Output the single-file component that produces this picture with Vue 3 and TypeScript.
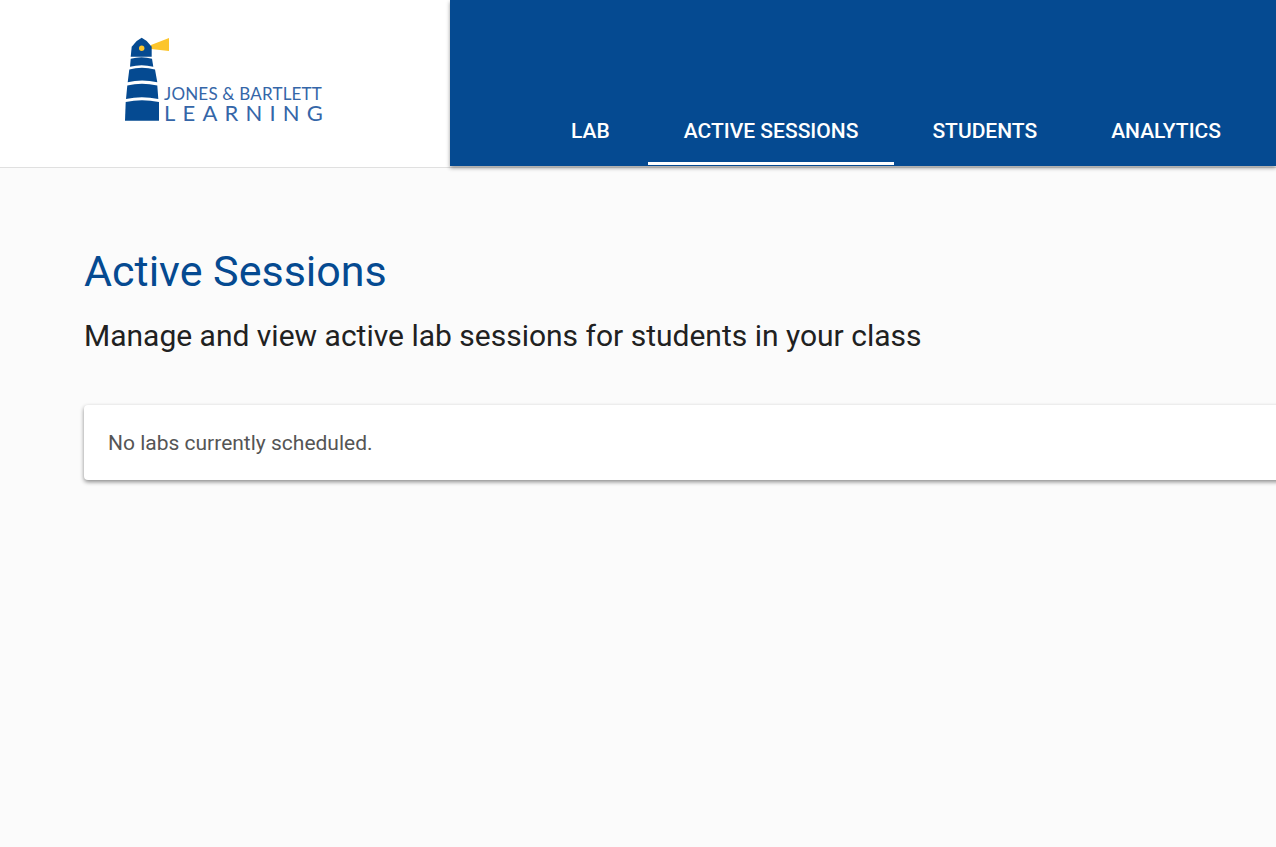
<template>
  <div class="page">
    <header class="topbar">
      <div class="brand">
        <div class="logo">
          <svg class="logo-mark" width="46" height="86" viewBox="0 0 46 86" aria-hidden="true">
            <path d="M27 9 L45 2 L45 15 L27 13 Z" fill="#fcc52c" />
            <path d="M6.7 20.7 L7.7 10.7 L12.7 5 L17.7 1.7 L22.7 5 L27.7 10.7 L27.7 20.7 Z" fill="#054a91" />
            <circle cx="17.7" cy="12.3" r="2.7" fill="#fcc52c" />
            <path d="M6.7 22.7 Q17.7 19.7 28 22.7 L29.3 30.7 Q17.7 27.7 6 30.7 Z" fill="#054a91" />
            <path d="M5.3 33.5 Q17.7 30 31 33.5 L33.3 46.3 Q17.7 42.8 3.7 46.3 Z" fill="#054a91" />
            <path d="M3.3 49.5 Q17.7 46 33.3 49.5 L34.3 63 Q17.7 59.5 2 63 Z" fill="#054a91" />
            <path d="M1.7 66 Q17.7 62.5 35 66 L35 84.7 L1 84.7 Z" fill="#054a91" />
          </svg>
          <div class="logo-words">
            <span class="logo-top">JONES &amp; BARTLETT</span>
            <span class="logo-bottom">LEARNING</span>
          </div>
        </div>
      </div>
      <nav class="tabs">
        <a
          v-for="tab in tabs"
          :key="tab"
          class="tab"
          :class="{ active: tab === activeTab }"
        >{{ tab }}</a>
      </nav>
    </header>

    <main class="content">
      <h1 class="title">Active Sessions</h1>
      <p class="subtitle">Manage and view active lab sessions for students in your class</p>
      <div class="card">No labs currently scheduled.</div>
    </main>
  </div>
</template>

<script setup lang="ts">
const tabs: string[] = ['LAB', 'ACTIVE SESSIONS', 'STUDENTS', 'ANALYTICS']
const activeTab = 'ACTIVE SESSIONS'
</script>

<style scoped>
.page {
  min-height: 847px;
  background: #fbfbfb;
  font-family: Roboto, "Liberation Sans", sans-serif;
  overflow: hidden;
}

.topbar {
  display: flex;
  height: 168px;
  background: #fff;
  border-bottom: 1px solid #e0e0e0;
  box-sizing: border-box;
}

.brand {
  width: 450px;
  flex-shrink: 0;
  padding: 36px 0 0 124px;
  box-sizing: border-box;
}

.logo {
  display: flex;
  align-items: flex-end;
  height: 86px;
}

.logo-mark {
  flex-shrink: 0;
}

.logo-words {
  display: flex;
  flex-direction: column;
  margin: 0 0 -2px -6px;
  color: #3566a8;
  font-family: Lato, sans-serif;
  white-space: nowrap;
}

.logo-top {
  font-size: 17px;
  line-height: 17px;
  letter-spacing: 0.2px;
}

.logo-bottom {
  font-size: 22px;
  line-height: 22px;
  letter-spacing: 7.2px;
}

.tabs {
  flex: 1;
  height: 166px;
  display: flex;
  justify-content: flex-end;
  align-items: flex-end;
  gap: 2px;
  padding-right: 19px;
  background: #054a91;
  box-shadow: 0 2px 4px rgba(0, 0, 0, 0.4);
  position: relative;
}

.tab {
  height: 68px;
  line-height: 68px;
  padding: 0 36px;
  color: #fff;
  font-size: 21px;
  font-weight: 500;
  box-sizing: border-box;
  margin-bottom: 1px;
  white-space: nowrap;
}

.tab.active {
  border-bottom: 3px solid #fff;
}

.content {
  padding: 77px 0 0 84px;
}

.title {
  margin: 0;
  color: #054a91;
  font-size: 43px;
  font-weight: 400;
  line-height: 52px;
}

.subtitle {
  margin: 21px 0 0;
  color: #212121;
  font-size: 30px;
  line-height: 36px;
}

.card {
  margin: 51px -12px 0 0;
  padding: 0 24px;
  height: 75px;
  line-height: 77px;
  background: #fff;
  border-radius: 4px;
  box-shadow: 0 2px 4px rgba(0, 0, 0, 0.45);
  color: #555;
  font-size: 21px;
}
</style>

<style>
body {
  overflow: hidden;
}
</style>
